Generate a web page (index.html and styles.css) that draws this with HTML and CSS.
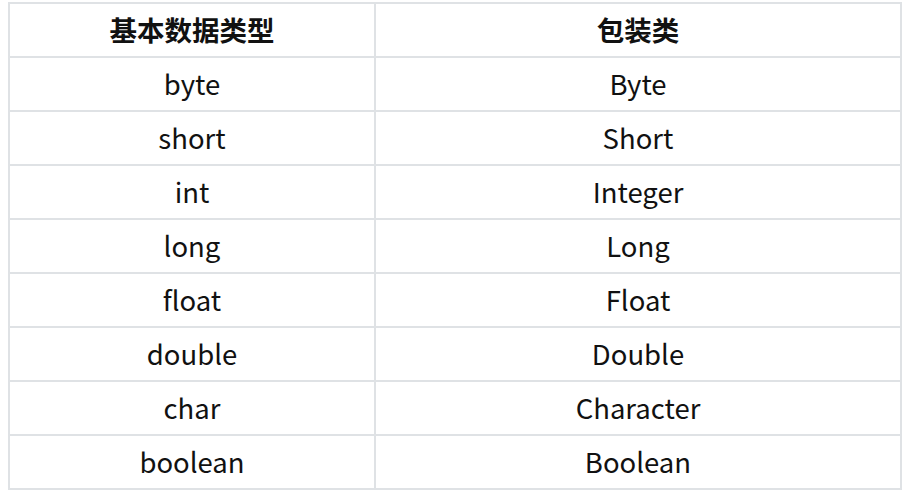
FILE: index.html
```html
<!DOCTYPE html>
<html lang="zh">
<head>
<meta charset="utf-8">
<link rel="stylesheet" href="styles.css">
</head>
<body>
<div class="page">
<table class="types">
<thead>
<tr><th class="c1">基本数据类型</th><th class="c2">包装类</th></tr>
</thead>
<tbody>
<tr><td>byte</td><td>Byte</td></tr>
<tr><td>short</td><td>Short</td></tr>
<tr><td>int</td><td>Integer</td></tr>
<tr><td>long</td><td>Long</td></tr>
<tr><td>float</td><td>Float</td></tr>
<tr><td>double</td><td>Double</td></tr>
<tr><td>char</td><td>Character</td></tr>
<tr><td>boolean</td><td>Boolean</td></tr>
</tbody>
</table>
</div>
</body>
</html>
```
FILE: styles.css
```css
html, body {
  margin: 0;
  background: #ffffff;
}
.page {
  padding: 2px 0 0 8px;
  font-family: "Noto Sans CJK SC", "Noto Sans", sans-serif;
  color: #111111;
}
.types {
  border-collapse: collapse;
  width: 894px;
  table-layout: fixed;
}
.types th,
.types td {
  border: 2px solid #dfe2e5;
  height: 52px;
  padding: 0;
  text-align: center;
  vertical-align: middle;
  font-size: 27.5px;
  line-height: 1;
}
.types th {
  font-weight: bold;
}
.c1 { width: 364px; }
.c2 { width: auto; }
```
